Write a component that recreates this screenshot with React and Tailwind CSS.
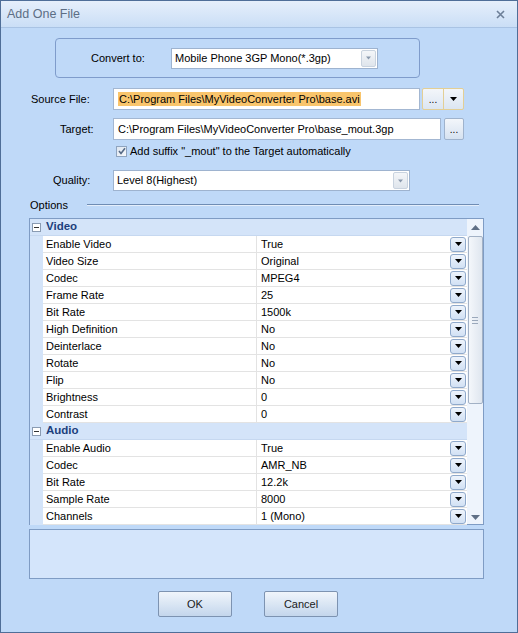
import React from 'react';

const font = { fontFamily: '"Liberation Sans", Arial, sans-serif' };

const videoRows = [
    ['Enable Video', 'True'],
    ['Video Size', 'Original'],
    ['Codec', 'MPEG4'],
    ['Frame Rate', '25'],
    ['Bit Rate', '1500k'],
    ['High Definition', 'No'],
    ['Deinterlace', 'No'],
    ['Rotate', 'No'],
    ['Flip', 'No'],
    ['Brightness', '0'],
    ['Contrast', '0'],
];

const audioRows = [
    ['Enable Audio', 'True'],
    ['Codec', 'AMR_NB'],
    ['Bit Rate', '12.2k'],
    ['Sample Rate', '8000'],
    ['Channels', '1 (Mono)'],
];

// small black triangle pointing down
function Arrow({ color = '#000', size = 7 }) {
    return (
        <svg width={size} height={4} viewBox="0 0 7 4">
            <path d="M0 0 H7 L3.5 4 Z" fill={color} />
        </svg>
    );
}

function ComboButton() {
    return (
        <div className="w-[15px] h-[17px] mr-[1px] flex items-center justify-center rounded-[2px] border border-[#c9d3df] bg-gradient-to-b from-[#f4f6f9] to-[#dfe5ec]">
            <Arrow color="#8a99ad" size={5} />
        </div>
    );
}

function GridDrop() {
    return (
        <div className="w-[16px] h-[15px] flex items-center justify-center rounded-[3px] border border-[#8fa9cb] bg-gradient-to-b from-[#eef4fc] to-[#d2e1f4]">
            <Arrow />
        </div>
    );
}

function Category({ name }) {
    return (
        <div className="h-[17px] flex items-center bg-[#d4e4f9] border-b border-[#c6d8f0]">
            <div className="w-[13px] flex items-center justify-center">
                <div className="w-[9px] h-[9px] border border-[#8a9bb2] bg-white flex items-center justify-center">
                    <div className="w-[5px] h-[1px] bg-[#333]" />
                </div>
            </div>
            <span className="ml-[3px] font-bold text-[#1c3f7c] text-[11.5px]">{name}</span>
        </div>
    );
}

function PropRow({ name, value }) {
    return (
        <div className="h-[17px] flex">
            <div className="w-[13px] bg-[#d4e4f9]" />
            <div className="w-[214px] bg-white border-b border-r border-[#e3e3e3] pl-[3px] flex items-center">{name}</div>
            <div className="flex-1 bg-white border-b border-[#e3e3e3] pl-[4px] pr-[1px] flex items-center justify-between">
                <span>{value}</span>
                <GridDrop />
            </div>
        </div>
    );
}

function Button({ children }) {
    return (
        <div className="w-[74px] h-[26px] flex items-center justify-center rounded-[2px] border border-[#7d93b1] bg-gradient-to-b from-[#f0f5fb] via-[#dae6f4] to-[#c4d6ec] text-[#1a1a1a]">
            {children}
        </div>
    );
}

export default function App() {
    return (
        <div style={font} className="w-[518px] h-[633px] border border-[#4f6e98] bg-[#bfd9f8] text-[11px] text-black flex flex-col overflow-hidden">
            {/* Title bar */}
            <div className="h-[27px] flex items-center justify-between px-[6px] bg-gradient-to-b from-[#e6effb] to-[#cadef6] border-b border-[#a9c3e4]">
                <span className="text-[12.5px] text-[#5d6e85]">Add One File</span>
                <svg width="9" height="9" viewBox="0 0 9 9" className="mr-[6px]">
                    <path d="M1 1 L8 8 M8 1 L1 8" stroke="#6d7f98" strokeWidth="1.6" />
                </svg>
            </div>

            {/* Convert to group */}
            <div className="ml-[54px] mt-[10px] w-[365px] h-[40px] rounded-[4px] border border-[#7f9ccb] flex items-center">
                <span className="ml-[35px] w-[80px]">Convert to:</span>
                <div className="w-[207px] h-[21px] bg-white border border-[#9eb3cf] flex items-center justify-between pl-[3px]">
                    <span>Mobile Phone 3GP Mono(*.3gp)</span>
                    <ComboButton />
                </div>
            </div>

            {/* Source file */}
            <div className="mt-[10px] h-[22px] flex items-center">
                <span className="w-[112px] pl-[30px]">Source File:</span>
                <div className="w-[307px] h-[22px] bg-white border border-[#a3b7d2] flex items-center pl-[4px]">
                    <span className="bg-[#f9c56c] px-[1px] leading-[14px]">C:\Program Files\MyVideoConverter Pro\base.avi</span>
                </div>
                <div className="ml-[2px] h-[22px] flex border border-[#e3cf95] rounded-[2px] bg-gradient-to-b from-[#f3f6fa] to-[#dce6f2]">
                    <div className="w-[21px] flex items-end justify-center pb-[4px] text-[10px] leading-none border-r border-[#e3cf95]">...</div>
                    <div className="w-[19px] flex items-center justify-center">
                        <Arrow />
                    </div>
                </div>
            </div>

            {/* Target */}
            <div className="mt-[8px] h-[22px] flex items-center">
                <span className="w-[112px] pl-[59px]">Target:</span>
                <div className="w-[328px] h-[22px] bg-white border border-[#a3b7d2] flex items-center pl-[4px]">
                    C:\Program Files\MyVideoConverter Pro\base_mout.3gp
                </div>
                <div className="ml-[3px] w-[20px] h-[22px] flex items-end justify-center pb-[4px] text-[10px] leading-none border border-[#9fb3cd] rounded-[2px] bg-gradient-to-b from-[#f3f6fa] to-[#d6e2f0]">...</div>
            </div>

            {/* Suffix checkbox */}
            <div className="mt-[5px] h-[12px] flex items-center ml-[115px]">
                <div className="w-[11px] h-[11px] border border-[#8fa4bf] bg-gradient-to-br from-[#dde6f1] to-[#f6f8fb] flex items-center justify-center">
                    <svg width="8" height="8" viewBox="0 0 8 8">
                        <path d="M1 4 L3 6.5 L7 1.2" stroke="#566a86" strokeWidth="1.6" fill="none" />
                    </svg>
                </div>
                <span className="ml-[3px]">Add suffix "_mout" to the Target automatically</span>
            </div>

            {/* Quality */}
            <div className="mt-[13px] h-[21px] flex items-center">
                <span className="w-[112px] pl-[52px]">Quality:</span>
                <div className="w-[297px] h-[21px] bg-white border border-[#9eb3cf] flex items-center justify-between pl-[3px]">
                    <span>Level 8(Highest)</span>
                    <ComboButton />
                </div>
            </div>

            {/* Options header */}
            <div className="mt-[7px] h-[14px] flex items-center ml-[29px]">
                <span className="w-[57px]">Options</span>
                <div className="w-[392px] h-[1px] bg-[#6f8db4] border-b border-[#e4eefb] box-content" />
            </div>

            {/* Property grid */}
            <div className="mt-[6px] ml-[28px] w-[455px] h-[307px] border border-[#7f9cc4] bg-[#eef4fc] flex">
                <div className="flex-1 flex flex-col">
                    <Category name="Video" />
                    {videoRows.map(([n, v], i) => (
                        <PropRow key={'v' + i} name={n} value={v} />
                    ))}
                    <Category name="Audio" />
                    {audioRows.map(([n, v], i) => (
                        <PropRow key={'a' + i} name={n} value={v} />
                    ))}
                </div>
                {/* Scrollbar */}
                <div className="w-[16px] flex flex-col items-center bg-[#eef4fc]">
                    <div className="h-[17px] flex items-center justify-center">
                        <svg width="9" height="5" viewBox="0 0 9 5">
                            <path d="M0 5 H9 L4.5 0 Z" fill="#5f6f86" />
                        </svg>
                    </div>
                    <div className="w-[15px] h-[168px] rounded-[2px] border border-[#a2b1c5] bg-gradient-to-r from-[#f4f7fb] to-[#dfe6ef] flex items-center justify-center">
                        <div className="flex flex-col gap-[2px]">
                            <div className="w-[6px] h-[1px] bg-[#9aa8bb]" />
                            <div className="w-[6px] h-[1px] bg-[#9aa8bb]" />
                            <div className="w-[6px] h-[1px] bg-[#9aa8bb]" />
                        </div>
                    </div>
                    <div className="flex-1" />
                    <div className="h-[14px] flex items-center justify-center">
                        <svg width="9" height="5" viewBox="0 0 9 5">
                            <path d="M0 0 H9 L4.5 5 Z" fill="#5f6f86" />
                        </svg>
                    </div>
                </div>
            </div>

            {/* Description panel */}
            <div className="mt-[4px] ml-[28px] w-[455px] h-[50px] border border-[#7f9cc4] bg-[#d4e5fb]" />

            {/* Buttons */}
            <div className="mt-[12px] ml-[157px] flex gap-[32px]">
                <Button>OK</Button>
                <Button>Cancel</Button>
            </div>
        </div>
    );
}
